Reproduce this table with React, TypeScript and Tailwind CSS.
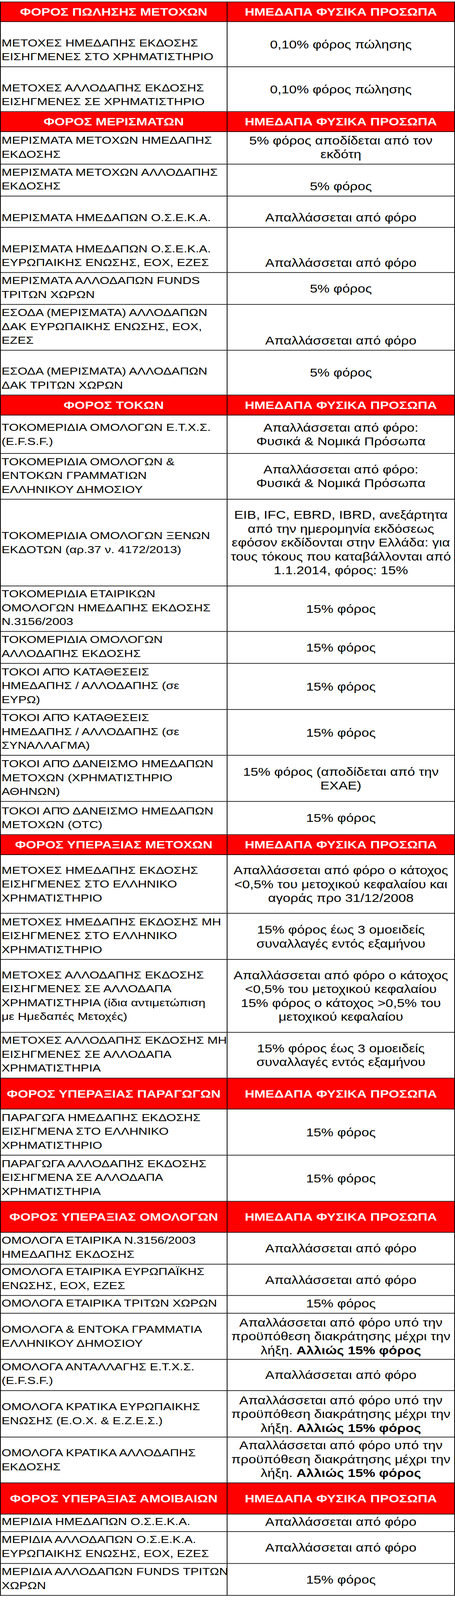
import React from 'react';

type Align = 'end' | 'center';

type Line = React.ReactNode;

interface Row {
  head?: string;
  h: number;
  left?: Line[];
  right?: Line[];
  la?: Align;
  ra?: Align;
}

const EXEMPT_TILL_MATURITY: Line[] = [
  'Απαλλάσσεται από φόρο υπό την',
  'προϋπόθεση διακράτησης μέχρι την',
  <>
    λήξη. <strong className="font-bold">Αλλιώς 15% φόρος</strong>
  </>,
];

const ROWS: Row[] = [
  { head: 'ΦΟΡΟΣ ΠΩΛΗΣΗΣ ΜΕΤΟΧΩΝ', h: 61 },
  { h: 140, left: ['ΜΕΤΟΧΕΣ ΗΜΕΔΑΠΗΣ ΕΚΔΟΣΗΣ', 'ΕΙΣΗΓΜΕΝΕΣ ΣΤΟ ΧΡΗΜΑΤΙΣΤΗΡΙΟ'], right: ['0,10% φόρος πώλησης'], la: 'end', ra: 'center' },
  { h: 139, left: ['ΜΕΤΟΧΕΣ ΑΛΛΟΔΑΠΗΣ ΕΚΔΟΣΗΣ', 'ΕΙΣΗΓΜΕΝΕΣ ΣΕ ΧΡΗΜΑΤΙΣΤΗΡΙΟ'], right: ['0,10% φόρος πώλησης'], la: 'end', ra: 'center' },

  { head: 'ΦΟΡΟΣ ΜΕΡΙΣΜΑΤΩΝ', h: 62 },
  { h: 101, left: ['ΜΕΡΙΣΜΑΤΑ ΜΕΤΟΧΩΝ ΗΜΕΔΑΠΗΣ', 'ΕΚΔΟΣΗΣ'], right: ['5% φόρος αποδίδεται από τον', 'εκδότη'], la: 'end', ra: 'end' },
  { h: 99, left: ['ΜΕΡΙΣΜΑΤΑ ΜΕΤΟΧΩΝ ΑΛΛΟΔΑΠΗΣ', 'ΕΚΔΟΣΗΣ'], right: ['5% φόρος'], la: 'end', ra: 'end' },
  { h: 97, left: ['ΜΕΡΙΣΜΑΤΑ ΗΜΕΔΑΠΩΝ Ο.Σ.Ε.Κ.Α.'], right: ['Απαλλάσσεται από φόρο'], la: 'end', ra: 'end' },
  { h: 140, left: ['ΜΕΡΙΣΜΑΤΑ ΗΜΕΔΑΠΩΝ Ο.Σ.Ε.Κ.Α.', 'ΕΥΡΩΠΑΙΚΗΣ ΕΝΩΣΗΣ, ΕΟΧ, ΕΖΕΣ'], right: ['Απαλλάσσεται από φόρο'], la: 'end', ra: 'end' },
  { h: 99, left: ['ΜΕΡΙΣΜΑΤΑ ΑΛΛΟΔΑΠΩΝ FUNDS', 'ΤΡΙΤΩΝ ΧΩΡΩΝ'], right: ['5% φόρος'], la: 'end', ra: 'center' },
  { h: 142, left: ['ΕΣΟΔΑ (ΜΕΡΙΣΜΑΤΑ) ΑΛΛΟΔΑΠΩΝ', 'ΔΑΚ ΕΥΡΩΠΑΙΚΗΣ ΕΝΩΣΗΣ, ΕΟΧ,', 'ΕΖΕΣ'], right: ['Απαλλάσσεται από φόρο'], la: 'end', ra: 'end' },
  { h: 139, left: ['ΕΣΟΔΑ (ΜΕΡΙΣΜΑΤΑ) ΑΛΛΟΔΑΠΩΝ', 'ΔΑΚ ΤΡΙΤΩΝ ΧΩΡΩΝ'], right: ['5% φόρος'], la: 'end', ra: 'center' },

  { head: 'ΦΟΡΟΣ ΤΟΚΩΝ', h: 62 },
  { h: 119, left: ['ΤΟΚΟΜΕΡΙΔΙΑ ΟΜΟΛΟΓΩΝ Ε.Τ.Χ.Σ.', '(E.F.S.F.)'], right: ['Απαλλάσσεται από φόρο:', 'Φυσικά & Νομικά Πρόσωπα'], la: 'center', ra: 'center' },
  { h: 142, left: ['ΤΟΚΟΜΕΡΙΔΙΑ ΟΜΟΛΟΓΩΝ &', 'ΕΝΤΟΚΩΝ ΓΡΑΜΜΑΤΙΩΝ', 'ΕΛΛΗΝΙΚΟΥ ΔΗΜΟΣΙΟΥ'], right: ['Απαλλάσσεται από φόρο:', 'Φυσικά & Νομικά Πρόσωπα'], la: 'end', ra: 'center' },
  {
    h: 269,
    left: ['ΤΟΚΟΜΕΡΙΔΙΑ ΟΜΟΛΟΓΩΝ ΞΕΝΩΝ', 'ΕΚΔΟΤΩΝ (αρ.37 ν. 4172/2013)'],
    right: [
      'EIB, IFC, EBRD, IBRD, ανεξάρτητα',
      'από την ημερομηνία εκδόσεως',
      'εφόσον εκδίδονται στην Ελλάδα: για',
      'τους τόκους που καταβάλλονται από',
      '1.1.2014, φόρος: 15%',
    ],
    la: 'center',
    ra: 'center',
  },
  { h: 141, left: ['ΤΟΚΟΜΕΡΙΔΙΑ ΕΤΑΙΡΙΚΩΝ', 'ΟΜΟΛΟΓΩΝ ΗΜΕΔΑΠΗΣ ΕΚΔΟΣΗΣ', 'Ν.3156/2003'], right: ['15% φόρος'], la: 'end', ra: 'center' },
  { h: 99, left: ['ΤΟΚΟΜΕΡΙΔΙΑ ΟΜΟΛΟΓΩΝ', 'ΑΛΛΟΔΑΠΗΣ ΕΚΔΟΣΗΣ'], right: ['15% φόρος'], la: 'end', ra: 'center' },
  { h: 143, left: ['ΤΟΚΟΙ ΑΠΌ ΚΑΤΑΘΕΣΕΙΣ', 'ΗΜΕΔΑΠΗΣ / ΑΛΛΟΔΑΠΗΣ (σε', 'ΕΥΡΩ)'], right: ['15% φόρος'], la: 'end', ra: 'center' },
  { h: 142, left: ['ΤΟΚΟΙ ΑΠΌ ΚΑΤΑΘΕΣΕΙΣ', 'ΗΜΕΔΑΠΗΣ / ΑΛΛΟΔΑΠΗΣ (σε', 'ΣΥΝΑΛΛΑΓΜΑ)'], right: ['15% φόρος'], la: 'end', ra: 'center' },
  { h: 143, left: ['ΤΟΚΟΙ ΑΠΌ ΔΑΝΕΙΣΜΟ ΗΜΕΔΑΠΩΝ', 'ΜΕΤΟΧΩΝ (ΧΡΗΜΑΤΙΣΤΗΡΙΟ', 'ΑΘΗΝΩΝ)'], right: ['15% φόρος (αποδίδεται από την', 'ΕΧΑΕ)'], la: 'end', ra: 'center' },
  { h: 103, left: ['ΤΟΚΟΙ ΑΠΌ ΔΑΝΕΙΣΜΟ ΗΜΕΔΑΠΩΝ', 'ΜΕΤΟΧΩΝ (OTC)'], right: ['15% φόρος'], la: 'end', ra: 'center' },

  { head: 'ΦΟΡΟΣ ΥΠΕΡΑΞΙΑΣ ΜΕΤΟΧΩΝ', h: 62 },
  {
    h: 182,
    left: ['ΜΕΤΟΧΕΣ ΗΜΕΔΑΠΗΣ ΕΚΔΟΣΗΣ', 'ΕΙΣΗΓΜΕΝΕΣ ΣΤΟ ΕΛΛΗΝΙΚΟ', 'ΧΡΗΜΑΤΙΣΤΗΡΙΟ'],
    right: ['Απαλλάσσεται από φόρο ο κάτοχος', '<0,5% του μετοχικού κεφαλαίου και', 'αγοράς προ 31/12/2008'],
    la: 'center',
    ra: 'center',
  },
  { h: 143, left: ['ΜΕΤΟΧΕΣ ΗΜΕΔΑΠΗΣ ΕΚΔΟΣΗΣ ΜΗ', 'ΕΙΣΗΓΜΕΝΕΣ ΣΤΟ ΕΛΛΗΝΙΚΟ', 'ΧΡΗΜΑΤΙΣΤΗΡΙΟ'], right: ['15% φόρος έως 3 ομοειδείς', 'συναλλαγές εντός εξαμήνου'], la: 'end', ra: 'center' },
  {
    h: 226,
    left: ['ΜΕΤΟΧΕΣ ΑΛΛΟΔΑΠΗΣ ΕΚΔΟΣΗΣ', 'ΕΙΣΗΓΜΕΝΕΣ ΣΕ ΑΛΛΟΔΑΠΑ', 'ΧΡΗΜΑΤΙΣΤΗΡΙΑ (ίδια αντιμετώπιση', 'με Ημεδαπές Μετοχές)'],
    right: ['Απαλλάσσεται από φόρο ο κάτοχος', '<0,5% του μετοχικού κεφαλαίου', '15% φόρος ο κάτοχος >0,5% του', 'μετοχικού κεφαλαίου'],
    la: 'center',
    ra: 'center',
  },
  { h: 142, left: ['ΜΕΤΟΧΕΣ ΑΛΛΟΔΑΠΗΣ ΕΚΔΟΣΗΣ ΜΗ', 'ΕΙΣΗΓΜΕΝΕΣ ΣΕ ΑΛΛΟΔΑΠΑ', 'ΧΡΗΜΑΤΙΣΤΗΡΙΑ'], right: ['15% φόρος έως 3 ομοειδείς', 'συναλλαγές εντός εξαμήνου'], la: 'end', ra: 'center' },

  { head: 'ΦΟΡΟΣ ΥΠΕΡΑΞΙΑΣ ΠΑΡΑΓΩΓΩΝ', h: 96 },
  { h: 143, left: ['ΠΑΡΑΓΩΓΑ ΗΜΕΔΑΠΗΣ ΕΚΔΟΣΗΣ', 'ΕΙΣΗΓΜΕΝΑ ΣΤΟ ΕΛΛΗΝΙΚΟ', 'ΧΡΗΜΑΤΙΣΤΗΡΙΟ'], right: ['15% φόρος'], la: 'end', ra: 'center' },
  { h: 143, left: ['ΠΑΡΑΓΩΓΑ ΑΛΛΟΔΑΠΗΣ ΕΚΔΟΣΗΣ', 'ΕΙΣΗΓΜΕΝΑ ΣΕ ΑΛΛΟΔΑΠΑ', 'ΧΡΗΜΑΤΙΣΤΗΡΙΑ'], right: ['15% φόρος'], la: 'end', ra: 'center' },

  { head: 'ΦΟΡΟΣ ΥΠΕΡΑΞΙΑΣ ΟΜΟΛΟΓΩΝ', h: 96 },
  { h: 99, left: ['ΟΜΟΛΟΓΑ ΕΤΑΙΡΙΚΑ Ν.3156/2003', 'ΗΜΕΔΑΠΗΣ ΕΚΔΟΣΗΣ'], right: ['Απαλλάσσεται από φόρο'], la: 'end', ra: 'center' },
  { h: 97, left: ['ΟΜΟΛΟΓΑ ΕΤΑΙΡΙΚΑ ΕΥΡΩΠΑΪΚΗΣ', 'ΕΝΩΣΗΣ, ΕΟΧ, ΕΖΕΣ'], right: ['Απαλλάσσεται από φόρο'], la: 'end', ra: 'center' },
  { h: 55, left: ['ΟΜΟΛΟΓΑ ΕΤΑΙΡΙΚΑ ΤΡΙΤΩΝ ΧΩΡΩΝ'], right: ['15% φόρος'], la: 'end', ra: 'end' },
  { h: 143, left: ['ΟΜΟΛΟΓΑ & ΕΝΤΟΚΑ ΓΡΑΜΜΑΤΙΑ', 'ΕΛΛΗΝΙΚΟΥ ΔΗΜΟΣΙΟΥ'], right: EXEMPT_TILL_MATURITY, la: 'center', ra: 'center' },
  { h: 97, left: ['ΟΜΟΛΟΓΑ ΑΝΤΑΛΛΑΓΗΣ Ε.Τ.Χ.Σ.', '(E.F.S.F.)'], right: ['Απαλλάσσεται από φόρο'], la: 'end', ra: 'center' },
  { h: 144, left: ['ΟΜΟΛΟΓΑ ΚΡΑΤΙΚΑ ΕΥΡΩΠΑΙΚΗΣ', 'ΕΝΩΣΗΣ (Ε.Ο.Χ. & Ε.Ζ.Ε.Σ.)'], right: EXEMPT_TILL_MATURITY, la: 'center', ra: 'center' },
  { h: 142, left: ['ΟΜΟΛΟΓΑ ΚΡΑΤΙΚΑ ΑΛΛΟΔΑΠΗΣ', 'ΕΚΔΟΣΗΣ'], right: EXEMPT_TILL_MATURITY, la: 'center', ra: 'end' },

  { head: 'ΦΟΡΟΣ ΥΠΕΡΑΞΙΑΣ ΑΜΟΙΒΑΙΩΝ', h: 97 },
  { h: 54, left: ['ΜΕΡΙΔΙΑ ΗΜΕΔΑΠΩΝ Ο.Σ.Ε.Κ.Α.'], right: ['Απαλλάσσεται από φόρο'], la: 'end', ra: 'end' },
  { h: 99, left: ['ΜΕΡΙΔΙΑ ΑΛΛΟΔΑΠΩΝ Ο.Σ.Ε.Κ.Α.', 'ΕΥΡΩΠΑΙΚΗΣ ΕΝΩΣΗΣ, ΕΟΧ, ΕΖΕΣ'], right: ['Απαλλάσσεται από φόρο'], la: 'end', ra: 'center' },
  { h: 99, left: ['ΜΕΡΙΔΙΑ ΑΛΛΟΔΑΠΩΝ FUNDS ΤΡΙΤΩΝ', 'ΧΩΡΩΝ'], right: ['15% φόρος'], la: 'end', ra: 'center' },
];

const Cell: React.FC<{ lines: Line[]; align: Align; side: 'left' | 'right' }> = ({ lines, align, side }) => (
  <div
    className={`flex flex-col min-w-0 ${align === 'end' ? 'justify-end pb-[8px]' : 'justify-center'} ${
      side === 'left'
        ? 'w-[580px] shrink-0 border-r-2 border-black pl-[2px] items-start text-left text-[32px]'
        : 'flex-1 items-center text-center text-[35px]'
    }`}
  >
    {lines.map((line, i) => (
      <div key={i} className="whitespace-nowrap leading-[43px]">
        {line}
      </div>
    ))}
  </div>
);

export default function App() {
  return (
    <div className="w-[1164px] h-[4096px] overflow-hidden bg-white">
      <div className="origin-top scale-y-[0.8256] pt-[5px] pb-[12px]">
        <div
          className="border-x-2 border-t-2 border-black text-black"
          style={{ fontFamily: '"Liberation Sans", Arial, sans-serif' }}
        >
          {ROWS.map((row, i) =>
            row.head ? (
              <div
                key={i}
                className="flex border-b-2 border-black bg-[#ff0000] text-white font-bold text-[34px]"
                style={{ height: row.h }}
              >
                <div className="w-[580px] shrink-0 border-r-2 border-black flex items-center justify-center whitespace-nowrap">
                  {row.head}
                </div>
                <div className="flex-1 min-w-0 flex items-center justify-center whitespace-nowrap">
                  ΗΜΕΔΑΠΑ ΦΥΣΙΚΑ ΠΡΟΣΩΠΑ
                </div>
              </div>
            ) : (
              <div key={i} className="flex border-b-2 border-black" style={{ height: row.h }}>
                <Cell lines={row.left ?? []} align={row.la ?? 'end'} side="left" />
                <Cell lines={row.right ?? []} align={row.ra ?? 'center'} side="right" />
              </div>
            )
          )}
        </div>
      </div>
    </div>
  );
}
